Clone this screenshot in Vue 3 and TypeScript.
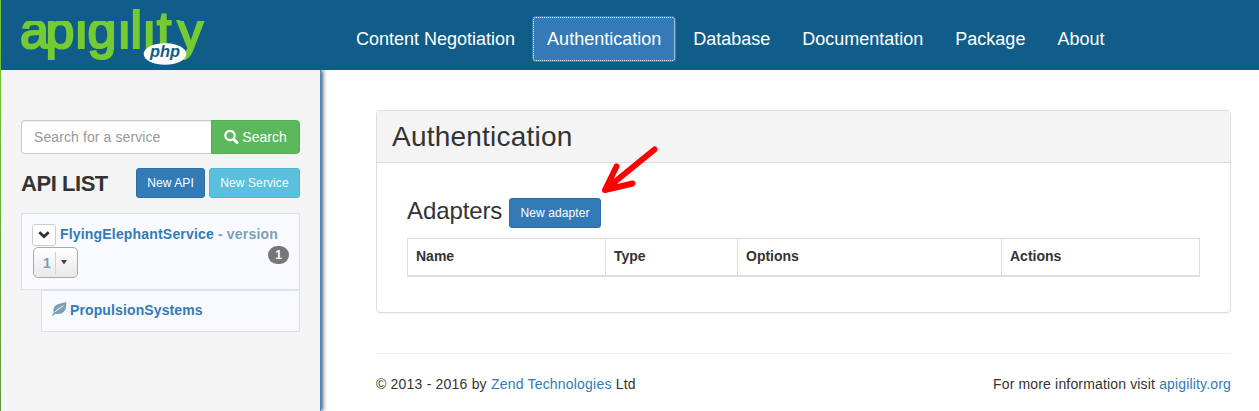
<script setup lang="ts">
interface NavItem {
  label: string
  active?: boolean
}
const nav: NavItem[] = [
  { label: 'Content Negotiation' },
  { label: 'Authentication', active: true },
  { label: 'Database' },
  { label: 'Documentation' },
  { label: 'Package' },
  { label: 'About' },
]
const columns: string[] = ['Name', 'Type', 'Options', 'Actions']
</script>

<template>
  <div class="page">
    <header class="topbar">
      <svg class="logo" width="190" height="68" viewBox="0 0 190 68" role="img" aria-label="apigility php">
        <clipPath id="word-shape"><path d="M0 21H111V7H122V21H135V12H160V21H190V68H0z" /></clipPath>
        <g clip-path="url(#word-shape)">
          <text class="word" y="47.500" x="0 25.500 55.500 67.500 98.500 110.500 123.500 137 157.500">apigility</text>
        </g>
        <ellipse cx="145" cy="54" rx="21.300" ry="10.800" />
        <text class="php" x="130" y="57" textLength="30" lengthAdjust="spacingAndGlyphs">php</text>
      </svg>
      <nav class="nav">
        <a v-for="item in nav" :key="item.label" class="nav-item" :class="{ active: item.active }">{{ item.label }}</a>
      </nav>
    </header>
    <div class="body">
      <aside class="sidebar">
        <div class="search">
          <input type="text" placeholder="Search for a service" />
          <button class="search-btn">
            <svg width="15" height="15" viewBox="0 0 15 15">
              <circle cx="6" cy="5.500" r="4.700" fill="none" stroke="#fff" stroke-width="2.200" />
              <path d="M9.700 9.200l3.300 3.300" stroke="#fff" stroke-width="2.900" stroke-linecap="round" />
            </svg>
            <span>Search</span>
          </button>
        </div>
        <div class="list-head">
          <h3>API LIST</h3>
          <button class="btn primary new-api">New API</button>
          <button class="btn info new-service">New Service</button>
        </div>
        <div class="api">
          <div class="api-main">
            <button class="toggle">
              <svg width="12" height="8" viewBox="0 0 12 8">
                <path d="M1.300 1.200L6 5.500l4.700-4.300" fill="none" stroke="#333" stroke-width="2.900" />
              </svg>
            </button>
            <span class="api-name">FlyingElephantService</span>
            <span class="version">- version</span>
          </div>
          <div class="api-sub">
            <button class="version-select">
              <span>1</span>
              <i></i>
              <svg width="6" height="5" viewBox="0 0 6 5"><path d="M0 0h6L3 4.500z" fill="#444" /></svg>
            </button>
            <span class="badge">1</span>
          </div>
        </div>
        <div class="service">
          <svg width="15" height="15" viewBox="0 0 15 15">
            <path d="M14.300 0C9 1.700 3 1.600 1.500 7c-.3 1.300-.1 2.500.3 3.500L0 13.300l1.100.7L3 11.700c3.500.6 7.800.4 10-3.400C14.700 5.800 14.100 3 14.300 0z" fill="#7d9fb5" />
            <path d="M3.200 9.800C5.500 6.800 8.500 6.300 11 4" fill="none" stroke="#f9faff" stroke-width="1" stroke-linecap="round" />
          </svg>
          <span>PropulsionSystems</span>
        </div>
      </aside>
      <main class="main">
        <section class="panel">
          <h2 class="panel-head">Authentication</h2>
          <div class="panel-body">
            <div class="adapters">
              <h3>Adapters</h3>
              <button class="btn primary new-adapter">New adapter</button>
              <svg class="arrow" width="60" height="54" viewBox="0 0 60 54">
                <path d="M54.500 6.500L6 46M16.500 23.500L5 47L32.500 40.500" fill="none" stroke="#f00" stroke-width="6" stroke-linecap="round" stroke-linejoin="round" />
              </svg>
            </div>
            <div class="table">
              <div v-for="column in columns" :key="column" class="th">{{ column }}</div>
            </div>
          </div>
        </section>
        <footer class="footer">
          <span class="copyright">© 2013 - 2016 by <a>Zend Technologies</a> Ltd</span>
          <span class="more">For more information visit <a>apigility.org</a></span>
        </footer>
      </main>
    </div>
  </div>
</template>

<style>
body {
  margin: 0;
  background: #fff;
}
</style>

<style scoped>
* {
  box-sizing: border-box;
}
.page {
  height: 411px;
  overflow: hidden;
  display: flex;
  flex-direction: column;
  font: 14px/20px "Liberation Sans", Arial, sans-serif;
  color: #333;
  background: linear-gradient(#75cb32 0, #5b9840 100%) left / 1px 100% no-repeat #fff;
  padding-left: 1px;
}
h2,
h3 {
  margin: 0;
  font-weight: 400;
}
button,
input {
  font-family: inherit;
  margin: 0;
}
a {
  color: #337ab7;
}
.topbar {
  height: 70px;
  flex: none;
  display: flex;
  align-items: flex-start;
  background: #115d89;
}
.logo {
  margin-left: 19px;
  flex: none;
}
.word {
  font: 52px "Liberation Sans", Arial, sans-serif;
  fill: #75cb32;
  stroke: #75cb32;
  stroke-width: 2.2px;
}
.logo ellipse {
  fill: #fff;
}
.php {
  font: italic bold 17px "Liberation Sans", Arial, sans-serif;
  fill: #115d89;
}
.nav {
  display: flex;
  gap: 2px;
  margin: 16px 0 0 131px;
}
.nav-item {
  color: #fff;
  font-size: 18px;
  line-height: 26px;
  height: 46px;
  padding: 10px 15px;
  white-space: nowrap;
}
.nav-item.active {
  background: #337ab7;
  border-radius: 4px;
  outline: 1px dotted #fff;
  outline-offset: -2px;
}
.body {
  flex: 1;
  display: flex;
}
.sidebar {
  width: 320px;
  flex: none;
  padding: 50px 20px 0;
  background: #f4f4f4;
  border-right: 1px solid #428bca;
  box-shadow: 2px 0 4px rgba(0, 0, 0, 0.65);
  clip-path: inset(0 -10px 0 0);
}
.search {
  display: flex;
  height: 34px;
}
.search input {
  width: 190px;
  padding: 6px 12px;
  font-size: 14px;
  letter-spacing: 0.1px;
  border: 1px solid #ccc;
  border-right: 0;
  border-radius: 4px 0 0 4px;
  background: #fff;
  box-shadow: inset 0 1px 1px rgba(0, 0, 0, 0.075);
}
.search input::placeholder {
  color: #999;
}
.search-btn {
  flex: 1;
  display: flex;
  align-items: center;
  justify-content: center;
  gap: 3px;
  padding: 0;
  color: #fff;
  font-size: 14px;
  background: #5cb85c;
  border: 1px solid #4cae4c;
  border-radius: 0 4px 4px 0;
}
.list-head {
  display: flex;
  gap: 4px;
  height: 30px;
  margin-top: 14px;
}
.list-head h3 {
  flex: 1;
  font-size: 22px;
  font-weight: 700;
  line-height: 32px;
  letter-spacing: -0.45px;
  white-space: nowrap;
}
.btn {
  height: 30px;
  padding: 0;
  font-size: 12px;
  line-height: 18px;
  letter-spacing: 0.1px;
  color: #fff;
  border: 1px solid;
  border-radius: 3px;
  white-space: nowrap;
}
.new-api {
  width: 69px;
}
.new-service {
  width: 91px;
}
.new-adapter {
  width: 92px;
}
.primary {
  background: #337ab7;
  border-color: #2e6da4;
}
.info {
  background: #5bc0de;
  border-color: #46b8da;
}
.api {
  height: 77px;
  margin-top: 15px;
  padding: 10px 10px 0;
  background: #f9faff;
  border: 1px solid #d9e2ea;
  font-weight: 700;
}
.api-main {
  display: flex;
  height: 23px;
  letter-spacing: 0.18px;
  white-space: nowrap;
}
.toggle {
  width: 24px;
  height: 22px;
  padding: 0;
  margin-right: 4px;
  display: flex;
  align-items: center;
  justify-content: center;
  background: #fff;
  border: 1px solid #ccc;
  border-radius: 3px;
}
.api-name {
  color: #337ab7;
  margin-right: 4px;
}
.version {
  color: #7d9fb5;
}
.api-sub {
  display: flex;
  justify-content: space-between;
}
.version-select {
  width: 45px;
  height: 31px;
  margin-left: 1px;
  padding: 0 0 0 9px;
  display: flex;
  align-items: center;
  border: 1px solid #aaa;
  border-radius: 5px;
  background: linear-gradient(#fff, #e9e8e7);
  color: #7d9fb5;
  font-size: 14px;
  font-weight: 700;
}
.version-select i {
  width: 1px;
  height: 22px;
  margin: 0 5px 0 4px;
  background: #d3d3d3;
}
.badge {
  width: 21px;
  height: 18px;
  margin-top: -1px;
  border-radius: 9px;
  background: #777;
  color: #fff;
  font-size: 12px;
  line-height: 18px;
  text-align: center;
}
.service {
  height: 42px;
  margin-left: 20px;
  padding: 9px 10px;
  display: flex;
  gap: 3px;
  background: #f9faff;
  border: 1px solid #d9e2ea;
  color: #337ab7;
  font-weight: 700;
  letter-spacing: 0.12px;
}
.service svg {
  margin-top: 2px;
}
.main {
  flex: 1;
  padding: 40px 28px 0 55px;
}
.panel {
  height: 203px;
  border: 1px solid #ddd;
  border-radius: 4px;
  box-shadow: 0 1px 1px rgba(0, 0, 0, 0.05);
}
.panel-head {
  height: 52px;
  padding: 0 15px;
  font-size: 28px;
  line-height: 52px;
  letter-spacing: 0.22px;
  background: #f4f4f4;
  border-bottom: 1px solid #ddd;
  border-radius: 3px 3px 0 0;
}
.panel-body {
  padding: 35px 30px 0;
}
.adapters {
  position: relative;
  display: flex;
  gap: 7px;
}
.adapters h3 {
  width: 95px;
  font-size: 24px;
  line-height: 26px;
  letter-spacing: -0.1px;
}
.arrow {
  position: absolute;
  left: 193px;
  top: -55px;
}
.table {
  display: grid;
  grid-template-columns: 198px 132px 264px 1fr;
  height: 39px;
  margin-top: 10px;
  border: 1px solid #ddd;
  border-bottom-width: 2px;
}
.th {
  padding: 7px 8px;
  font-weight: 700;
  border-right: 1px solid #ddd;
}
.th:last-child {
  border-right: 0;
}
.footer {
  display: flex;
  justify-content: space-between;
  margin-top: 40px;
  padding-top: 20px;
  border-top: 1px solid #eee;
}
.copyright {
  letter-spacing: 0.2px;
}
.more {
  letter-spacing: 0.16px;
}
</style>
